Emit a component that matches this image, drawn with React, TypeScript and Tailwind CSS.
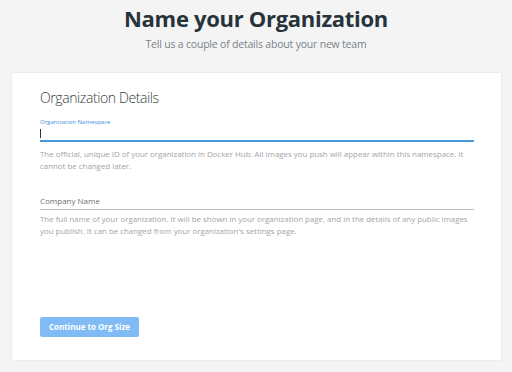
export default function App() {
  return (
    <div className="flex h-[372px] w-[512px] flex-col items-center overflow-hidden bg-[#f4f4f5] font-['Open_Sans',sans-serif]">
      <h1 className="mt-[3px] text-[22px] font-bold leading-[30px] tracking-[-0.3px] text-[#27333a]">
        Name your Organization
      </h1>
      <p className="mt-[3px] text-[10.5px] leading-[16px] tracking-[-0.2px] text-[#7b8387]">
        Tell us a couple of details about your new team
      </p>
      <div className="ml-[11px] mt-[20px] flex h-[289px] w-[491px] flex-col self-start rounded-[2px] border border-[#ececec] bg-white pl-[28px] pr-[27px] pt-[15px]">
        <h2 className="text-[14px] font-light leading-[20px] tracking-[-0.4px] text-[#353d42]">Organization Details</h2>
        <div className="mt-[10px]">
          <label className="block text-[6px] leading-[9px] text-[#3d8fdc]">
            Organization Namespace
          </label>
          <div className="flex h-[15px] items-center border-b-2 border-[#4a98dc]">
            <span className="h-[9px] w-px bg-[#333]" />
          </div>
          <p className="mt-[7px] text-[7.9px] leading-[11.5px] text-[#a0a5a8]">
            The official, unique ID of your organization in Docker Hub. All images you push will appear within this namespace. It cannot be changed later.
          </p>
        </div>
        <div className="mt-[23px]">
          <div className="border-b border-[#bdbdbd] pb-[2px] text-[8px] leading-[12px] text-[#6b7276]">
            Company Name
          </div>
          <p className="mt-[4px] text-[7.9px] leading-[11.5px] text-[#a0a5a8]">
            The full name of your organization. It will be shown in your organization page, and in the details of any public images you publish. It can be changed from your organization's settings page.
          </p>
        </div>
        <button className="mb-[23px] mt-auto h-[20px] w-[99px] rounded-[2px] bg-[#80bbf6] text-[8px] font-bold text-white">
          Continue to Org Size
        </button>
      </div>
    </div>
  );
}
